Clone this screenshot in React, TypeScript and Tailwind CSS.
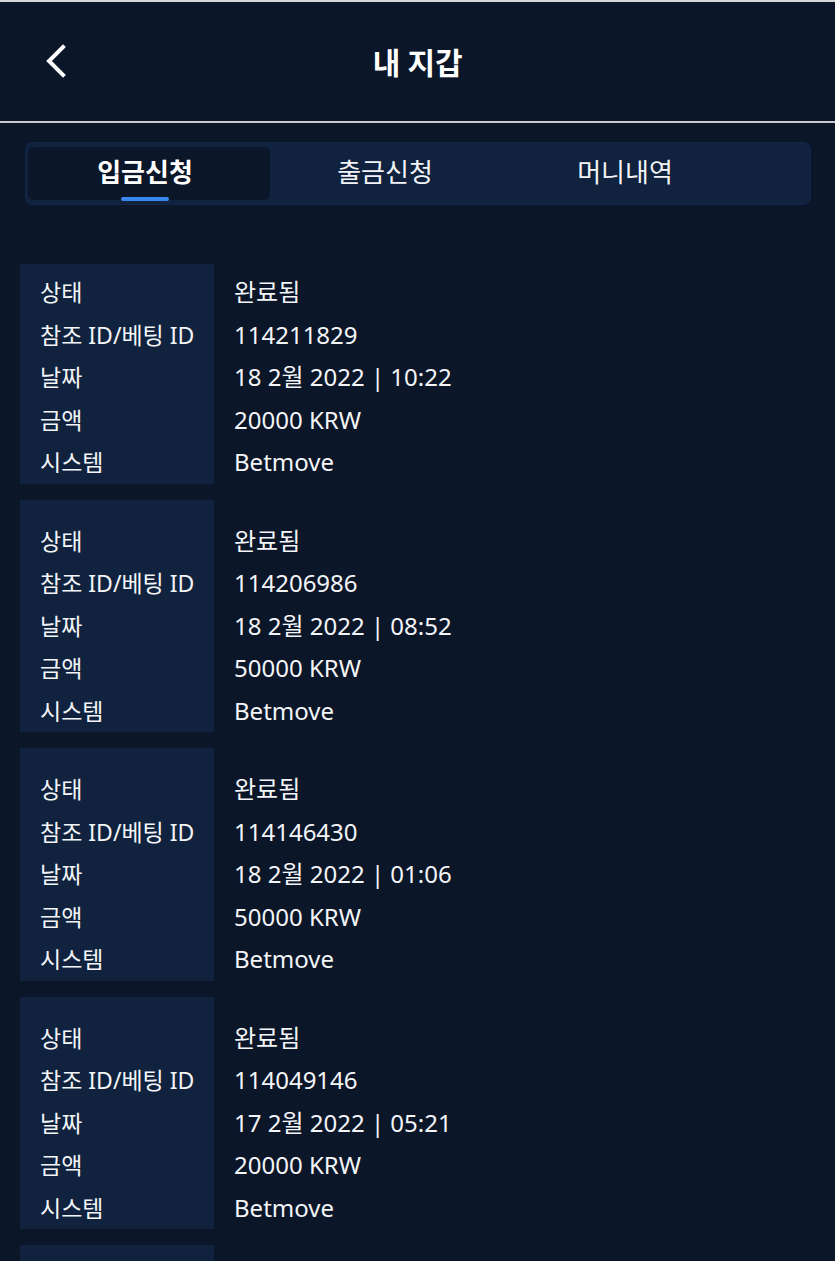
import React from "react";

type Rec = { id: string; date: string; amount: string };

const records: Rec[] = [
  { id: "114211829", date: "18 2월 2022 | 10:22", amount: "20000 KRW" },
  { id: "114206986", date: "18 2월 2022 | 08:52", amount: "50000 KRW" },
  { id: "114146430", date: "18 2월 2022 | 01:06", amount: "50000 KRW" },
  { id: "114049146", date: "17 2월 2022 | 05:21", amount: "20000 KRW" },
  { id: "114011111", date: "17 2월 2022 | 01:10", amount: "20000 KRW" },
];

const labels = ["상태", "참조 ID/베팅 ID", "날짜", "금액", "시스템"];

function Card({ rec, first }: { rec: Rec; first: boolean }) {
  const values = ["완료됨", rec.id, rec.date, rec.amount, "Betmove"];
  return (
    <div className="flex">
      <div className={`w-[194px] shrink-0 bg-[#10223d] pl-5 text-[23px] ${first ? "pt-[7px]" : "pt-5"}`}>
        {labels.map((l) => (
          <div key={l} className="h-[42.5px] flex items-center whitespace-nowrap">
            {l}
          </div>
        ))}
      </div>
      <div className={`pl-5 text-[24px] ${first ? "pt-[7px]" : "pt-5"}`}>
        {values.map((v, i) => (
          <div key={i} className="h-[42.5px] flex items-center whitespace-nowrap">
            {v}
          </div>
        ))}
      </div>
    </div>
  );
}

export default function App() {
  return (
    <div
      className="w-[835px] h-[1261px] overflow-hidden bg-[#0b1628] text-white"
      style={{ fontFamily: '"Noto Sans", "Noto Sans CJK KR", sans-serif' }}
    >
      <div className="h-[2px] bg-[#d4d6da]" />
      <div className="relative h-[119px] flex items-center justify-center">
        <div className="absolute left-[44px] top-[42px]">
          <svg width="24" height="34" viewBox="0 0 24 34" fill="none">
            <path d="M19 3 L5 17 L19 31" stroke="white" strokeWidth="4" strokeLinecap="square" strokeLinejoin="miter" />
          </svg>
        </div>
        <div className="text-[30px] font-bold tracking-[-0.3px] mt-[1px]">내 지갑</div>
      </div>
      <div className="h-[2px] bg-[#c9cbcf]" />
      <div className="pl-[26px] pr-[25px] pt-[20px]">
        <div className="h-[61px] rounded-[7px] bg-[#10223d] pl-[2px] py-[4px] flex shadow-[0_0_0_1px_#13264a]">
          <div className="w-[242px] rounded-[6px] bg-[#0b1628] flex items-center justify-center pr-[8px] text-[26px] font-bold">
            <div className="relative -mt-[2px]">
              입금신청
              <div className="absolute -bottom-[9px] left-1/2 -translate-x-1/2 w-[48px] h-[4px] rounded-full bg-[#3a86f0]" />
            </div>
          </div>
          <div className="w-[230px] flex items-center justify-center text-[26px] text-[#f2f4f7]">
            <span className="-mt-[2px]">출금신청</span>
          </div>
          <div className="w-[250px] flex items-center justify-center text-[26px] text-[#f2f4f7]">
            <span className="-mt-[2px]">머니내역</span>
          </div>
        </div>
      </div>
      <div className="pl-[20px] pt-[60px] flex flex-col gap-4 text-[#f3f5f8]">
        {records.map((r, i) => (
          <Card key={r.id} rec={r} first={i === 0} />
        ))}
      </div>
    </div>
  );
}
